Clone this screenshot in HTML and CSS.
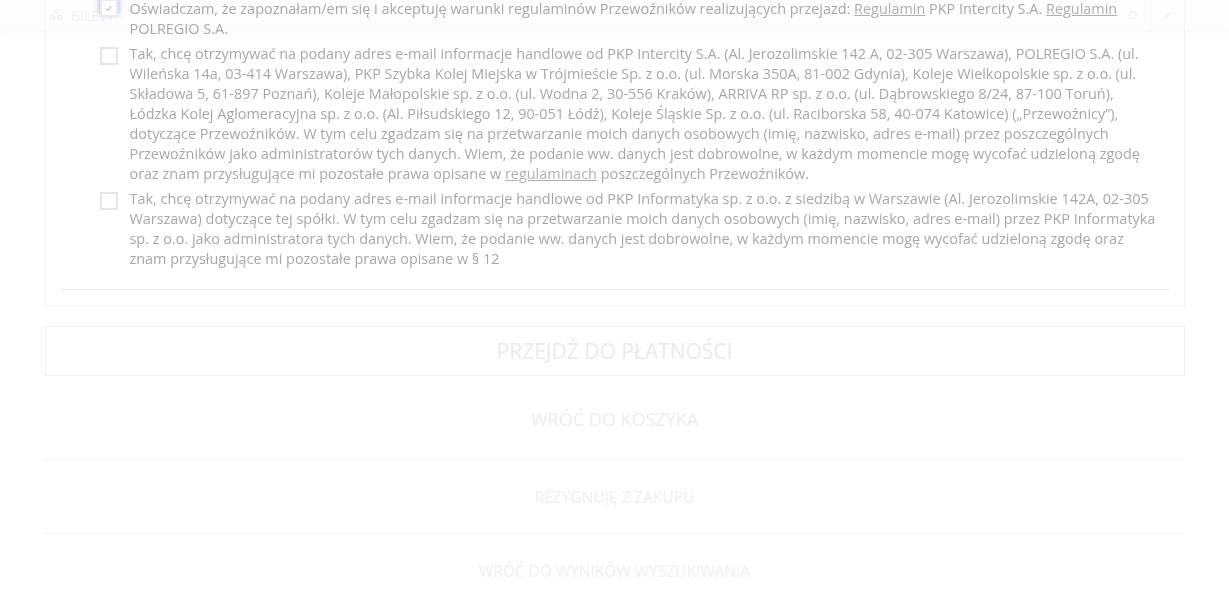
FILE: index.html
```html
<!DOCTYPE html>
<html lang="pl">
<head>
<meta charset="utf-8">
<title>Podsumowanie</title>
<link rel="stylesheet" href="styles.css">
</head>
<body>
<header class="topbar">
  <div class="topbar-inner">
    <div class="brand">
      <svg class="brand-icon" viewBox="0 0 16 16" width="14" height="14"><circle cx="4" cy="11" r="2.3" fill="none" stroke="currentColor" stroke-width="1.3"/><circle cx="12" cy="11" r="2.3" fill="none" stroke="currentColor" stroke-width="1.3"/><circle cx="8" cy="4" r="2.3" fill="none" stroke="currentColor" stroke-width="1.3"/></svg>
      <span>BILETY</span>
    </div>
    <div class="tools">
      <span class="tool"><svg viewBox="0 0 12 12" width="10" height="10"><circle cx="6" cy="6" r="4" fill="none" stroke="currentColor" stroke-width="1.5"/></svg></span>
      <span class="tool"><svg viewBox="0 0 12 12" width="10" height="10"><path d="M2 10 L10 2" stroke="currentColor" stroke-width="1.8"/></svg></span>
    </div>
  </div>
</header>

<main class="page">
  <section class="card">
    <div class="consents">
      <label class="consent">
        <span class="box checked"><svg viewBox="0 0 12 12" width="9" height="9"><path d="M2.5 6.2 L5 8.5 L9.5 3.5" fill="none" stroke="#b9b9b9" stroke-width="1.4"/></svg></span>
        <span class="txt">Oświadczam, że zapoznałam/em się i akceptuję warunki regulaminów Przewoźników realizujących przejazd: <a href="#">Regulamin</a> PKP Intercity S.A. <a href="#">Regulamin</a> POLREGIO S.A.</span>
      </label>
      <label class="consent">
        <span class="box"></span>
        <span class="txt">Tak, chcę otrzymywać na podany adres e-mail informacje handlowe od PKP Intercity S.A. (Al. Jerozolimskie 142 A, 02-305 Warszawa), POLREGIO S.A. (ul. Wileńska 14a, 03-414 Warszawa), PKP Szybka Kolej Miejska w Trójmieście Sp. z o.o. (ul. Morska 350A, 81-002 Gdynia), Koleje Wielkopolskie sp. z o.o. (ul. Składowa 5, 61-897 Poznań), Koleje Małopolskie sp. z o.o. (ul. Wodna 2, 30-556 Kraków), ARRIVA RP sp. z o.o. (ul. Dąbrowskiego 8/24, 87-100 Toruń), Łódzka Kolej Aglomeracyjna sp. z o.o. (Al. Piłsudskiego 12, 90-051 Łódź), Koleje Śląskie Sp. z o.o. (ul. Raciborska 58, 40-074 Katowice) („Przewoźnicy”), dotyczące Przewoźników. W tym celu zgadzam się na przetwarzanie moich danych osobowych (imię, nazwisko, adres e-mail) przez poszczególnych Przewoźników jako administratorów tych danych. Wiem, że podanie ww. danych jest dobrowolne, w każdym momencie mogę wycofać udzieloną zgodę oraz znam przysługujące mi pozostałe prawa opisane w <a href="#">regulaminach</a> poszczególnych Przewoźników.</span>
      </label>
      <label class="consent">
        <span class="box"></span>
        <span class="txt">Tak, chcę otrzymywać na podany adres e-mail informacje handlowe od PKP Informatyka sp. z o.o. z siedzibą w Warszawie (Al. Jerozolimskie 142A, 02-305 Warszawa) dotyczące tej spółki. W tym celu zgadzam się na przetwarzanie moich danych osobowych (imię, nazwisko, adres e-mail) przez PKP Informatyka sp. z o.o. jako administratora tych danych. Wiem, że podanie ww. danych jest dobrowolne, w każdym momencie mogę wycofać udzieloną zgodę oraz znam przysługujące mi pozostałe prawa opisane w § 12</span>
      </label>
    </div>
    <div class="divider"></div>
  </section>

  <button class="btn-primary">PRZEJDŹ DO PŁATNOŚCI</button>

  <nav class="actions">
    <a href="#" class="action action-big">WRÓĆ DO KOSZYKA</a>
    <a href="#" class="action">REZYGNUJĘ Z ZAKUPU</a>
    <a href="#" class="action">WRÓĆ DO WYNIKÓW WYSZUKIWANIA</a>
  </nav>
</main>
</body>
</html>
```

FILE: styles.css
```css
* { box-sizing: border-box; }
html, body { margin: 0; padding: 0; }
body {
  background: #ffffff;
  font-family: "Open Sans", "Noto Sans", "DejaVu Sans", sans-serif;
  overflow: hidden;
  height: 606px;
}

.topbar {
  position: fixed;
  top: 0;
  left: 0;
  right: 0;
  height: 30px;
  background: #fdfdfd;
  box-shadow: 0 1px 4px rgba(0,0,0,0.05);
  z-index: 1;
}
.topbar-inner {
  margin: 0 44px;
  height: 30px;
  border-left: 1px solid #f6f6f6;
  border-right: 1px solid #f6f6f6;
  display: flex;
  align-items: center;
  justify-content: space-between;
}
.brand {
  display: flex;
  align-items: center;
  gap: 8px;
  padding-left: 4px;
  color: #f1f1f1;
  font-size: 14px;
}
.brand-icon { color: #f0f0f0; }
.tools { display: flex; height: 30px; }
.tool {
  width: 34px;
  display: flex;
  align-items: center;
  justify-content: center;
  color: #f2f2f2;
  border-left: 1px solid #f7f7f7;
}
.tool:first-child { border-left: none; }

.page {
  width: 1140px;
  margin: -1px auto 0;
}

.card {
  background: #fff;
  border: 1px solid #f3f3f3;
  border-top: none;
  box-shadow: 0 2px 6px rgba(0,0,0,0.015);
  padding: 0 15px 15px;
}
.consents {
  display: flex;
  flex-direction: column;
  gap: 5px;
  padding: 0 6px 20px 39px;
  position: relative;
  z-index: 2;
}
.consent {
  display: flex;
  align-items: flex-start;
  gap: 12px;
  font-size: 14.43px;
  line-height: 20px;
  color: #a8a8a8;
}
.box {
  flex: 0 0 18px;
  width: 18px;
  height: 18px;
  margin-top: 3px;
  border: 2px solid #e6e6e6;
  background: #fff;
  display: flex;
  align-items: center;
  justify-content: center;
}
.box.checked {
  margin-top: 0;
  border-color: #eaeaf0;
  box-shadow: 0 -3px 6px rgba(70,100,190,0.55);
}
.txt a { color: #b0b0b0; text-decoration: underline; }
.divider { height: 1px; background: #ececec; }

.btn-primary {
  display: block;
  width: 100%;
  height: 50px;
  margin-top: 20px;
  background: #fff;
  border: 1px solid #efefef;
  font-family: inherit;
  font-size: 21px;
  color: #ebebeb;
  letter-spacing: 0;
}

.actions { display: flex; flex-direction: column; }
.action {
  display: flex;
  align-items: center;
  justify-content: center;
  height: 74px;
  font-size: 15.5px;
  color: #f0f0f0;
  text-decoration: none;
  border-top: 1px solid #f5f5f5;
}
.action-big {
  border-top: none;
  height: 83px;
  padding-top: 3px;
  font-size: 18px;
  color: #ededed;
}
```
